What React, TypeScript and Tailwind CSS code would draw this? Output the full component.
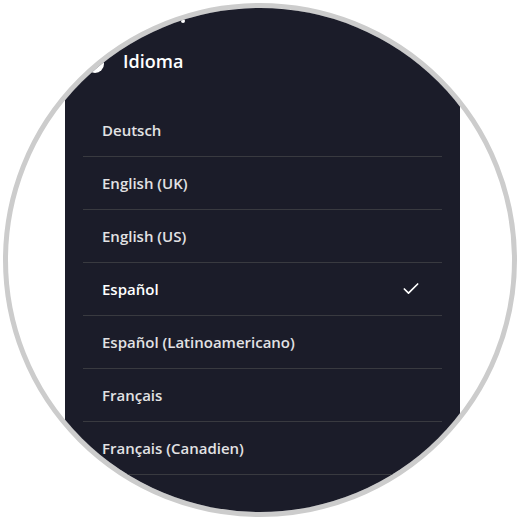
import { Check } from 'lucide-react';

const LANGUAGES = [
    'Deutsch',
    'English (UK)',
    'English (US)',
    'Español',
    'Español (Latinoamericano)',
    'Français',
    'Français (Canadien)',
    'Italiano',
];

const SELECTED = 'Español';

export default function App() {
    return (
        <div className="w-[520px] h-[520px] bg-white flex items-center justify-center font-['Open_Sans','Noto_Sans',sans-serif]">
            {/* Circular crop */}
            <div className="w-[514px] h-[514px] rounded-full border-[5px] border-[#cccccc] overflow-hidden bg-white">
                <div className="ml-[57px] w-[395px] h-full bg-[#1b1c29] flex flex-col">
                    {/* Header */}
                    <div className="relative h-[96px] shrink-0">
                        <span className="absolute left-[116px] top-[11px] w-[4px] h-[4px] rounded-full bg-white" />
                        <div className="absolute left-[21px] top-[47px] w-[18px] h-[18px] rounded-full bg-white" />
                        <h1 className="absolute left-[58px] top-[40px] text-[18px] leading-[26px] font-semibold text-white">Idioma</h1>
                    </div>

                    {/* Language list */}
                    <ul className="mx-[18px] flex flex-col">
                        {LANGUAGES.map((lang) => {
                            const active = lang === SELECTED;
                            return (
                                <li
                                    key={lang}
                                    className="h-[53px] shrink-0 border-b border-[#393a40] flex items-center justify-between pl-[19px] pr-[21px]"
                                >
                                    <span className={`text-[15px] font-semibold ${active ? 'text-white' : 'text-[#e2e2e4]'}`}>
                                        {lang}
                                    </span>
                                    {active && <Check size={20} strokeWidth={2} className="text-white" />}
                                </li>
                            );
                        })}
                    </ul>
                </div>
            </div>
        </div>
    );
}
